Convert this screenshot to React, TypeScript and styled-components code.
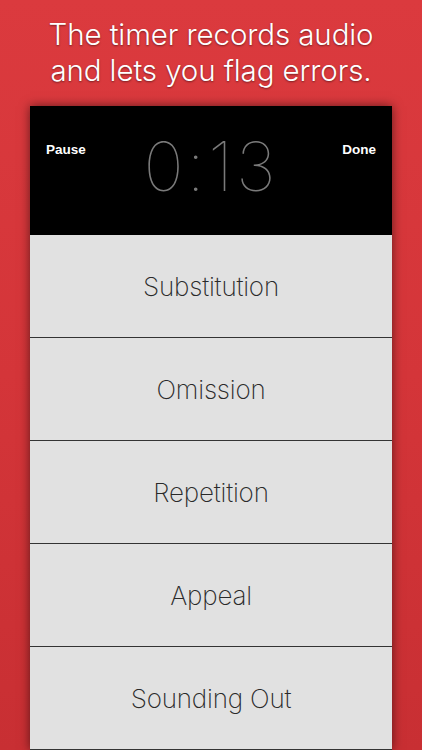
import React from 'react';
import styled, { createGlobalStyle } from 'styled-components';

const GlobalStyle = createGlobalStyle`
  html, body {
    margin: 0;
    padding: 0;
  }
  body {
    font-family: Inter, "Liberation Sans", sans-serif;
    overflow: hidden;
  }
`;

const Screen = styled.div`
  align-items: center;
  background: linear-gradient(180deg, #db3a3e 0%, #d43539 50%, #c82f33 100%);
  display: flex;
  flex-direction: column;
  height: 750px;
  overflow: hidden;
  width: 422px;
`;

const Headline = styled.h1`
  color: #fff;
  font-family: Inter, "Liberation Sans", sans-serif;
  font-size: 29.5px;
  font-weight: 280;
  letter-spacing: -0.1px;
  line-height: 36px;
  margin: 16px 0 0;
  text-align: center;
  text-shadow: 0 1px 2px rgba(0, 0, 0, 0.45);
`;

const Device = styled.div`
  box-shadow: 0 0 10px rgba(0, 0, 0, 0.55);
  display: flex;
  flex-direction: column;
  margin-top: 18px;
  width: 362px;
`;

const TimerBar = styled.div`
  align-items: flex-start;
  background: #000;
  box-sizing: border-box;
  display: flex;
  height: 129px;
  justify-content: space-between;
  padding: 36px 16px 0;
`;

const BarButton = styled.span<{ align?: 'left' | 'right' }>`
  color: #fff;
  font-family: "Liberation Sans", Arial, sans-serif;
  font-size: 13.5px;
  font-weight: 700;
  line-height: 14px;
  padding-top: 1px;
  text-align: ${p => (p.align === 'right' ? 'right' : 'left')};
  width: 42px;
`;

const Clock = styled.span`
  color: #7a7a7a;
  font-family: Inter, "Liberation Sans", sans-serif;
  font-size: 68px;
  font-weight: 100;
  letter-spacing: 3px;
  line-height: 66px;
  margin-top: -9px;
`;

const ErrorRow = styled.div`
  align-items: center;
  background: #e1e1e1;
  border-bottom: 1px solid #333;
  color: #2a2a2a;
  display: flex;
  font-family: Inter, "Liberation Sans", sans-serif;
  font-size: 26px;
  font-weight: 250;
  height: 102px;
  justify-content: center;
  letter-spacing: -0.2px;
`;

const errors = ['Substitution', 'Omission', 'Repetition', 'Appeal', 'Sounding Out'];

export default function App() {
  return (
    <>
      <GlobalStyle />
      <Screen>
        <Headline>
          The timer records audio
          <br />
          and lets you flag errors.
        </Headline>
        <Device>
          <TimerBar>
            <BarButton>Pause</BarButton>
            <Clock>0:13</Clock>
            <BarButton align="right">Done</BarButton>
          </TimerBar>
          {errors.map(name => (
            <ErrorRow key={name}>{name}</ErrorRow>
          ))}
        </Device>
      </Screen>
    </>
  );
}
